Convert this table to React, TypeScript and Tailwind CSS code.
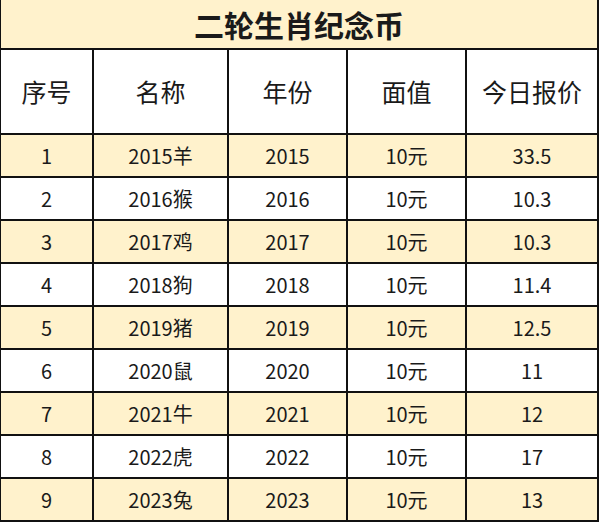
import React from "react";

const rows = [
  ["1", "2015羊", "2015", "10元", "33.5"],
  ["2", "2016猴", "2016", "10元", "10.3"],
  ["3", "2017鸡", "2017", "10元", "10.3"],
  ["4", "2018狗", "2018", "10元", "11.4"],
  ["5", "2019猪", "2019", "10元", "12.5"],
  ["6", "2020鼠", "2020", "10元", "11"],
  ["7", "2021牛", "2021", "10元", "12"],
  ["8", "2022虎", "2022", "10元", "17"],
  ["9", "2023兔", "2023", "10元", "13"],
];

const headers = ["序号", "名称", "年份", "面值", "今日报价"];
const widths = ["w-[93px]", "w-[135px]", "w-[119px]", "w-[119px]", "w-[132px]"];

export default function App() {
  return (
    <div
      className="w-[600px] h-[523px] bg-white"
      style={{ fontFamily: '"Noto Sans CJK SC", "Noto Sans", sans-serif' }}
    >
      <div className="w-[599px] border-l border-[#111] flex flex-col text-[#1a1a1a]">
        <div className="h-[50px] bg-[#fff2cc] border-r-2 border-b-2 border-[#111] flex items-center justify-center text-[30px] font-bold leading-none">
          二轮生肖纪念币
        </div>
        <div className="flex h-[85px]">
          {headers.map((h, i) => (
            <div
              key={i}
              className={`${widths[i]} border-r-2 border-b-2 border-[#111] bg-white flex items-center justify-center text-[25px] leading-none`}
            >
              {h}
            </div>
          ))}
        </div>
        {rows.map((r, ri) => (
          <div key={ri} className={`flex h-[43px] ${ri % 2 === 0 ? "bg-[#fff2cc]" : "bg-white"}`}>
            {r.map((c, ci) => (
              <div
                key={ci}
                className={`${widths[ci]} border-r-2 border-b-2 border-[#111] flex items-center justify-center text-[20px] leading-none`}
              >
                {c}
              </div>
            ))}
          </div>
        ))}
      </div>
    </div>
  );
}
